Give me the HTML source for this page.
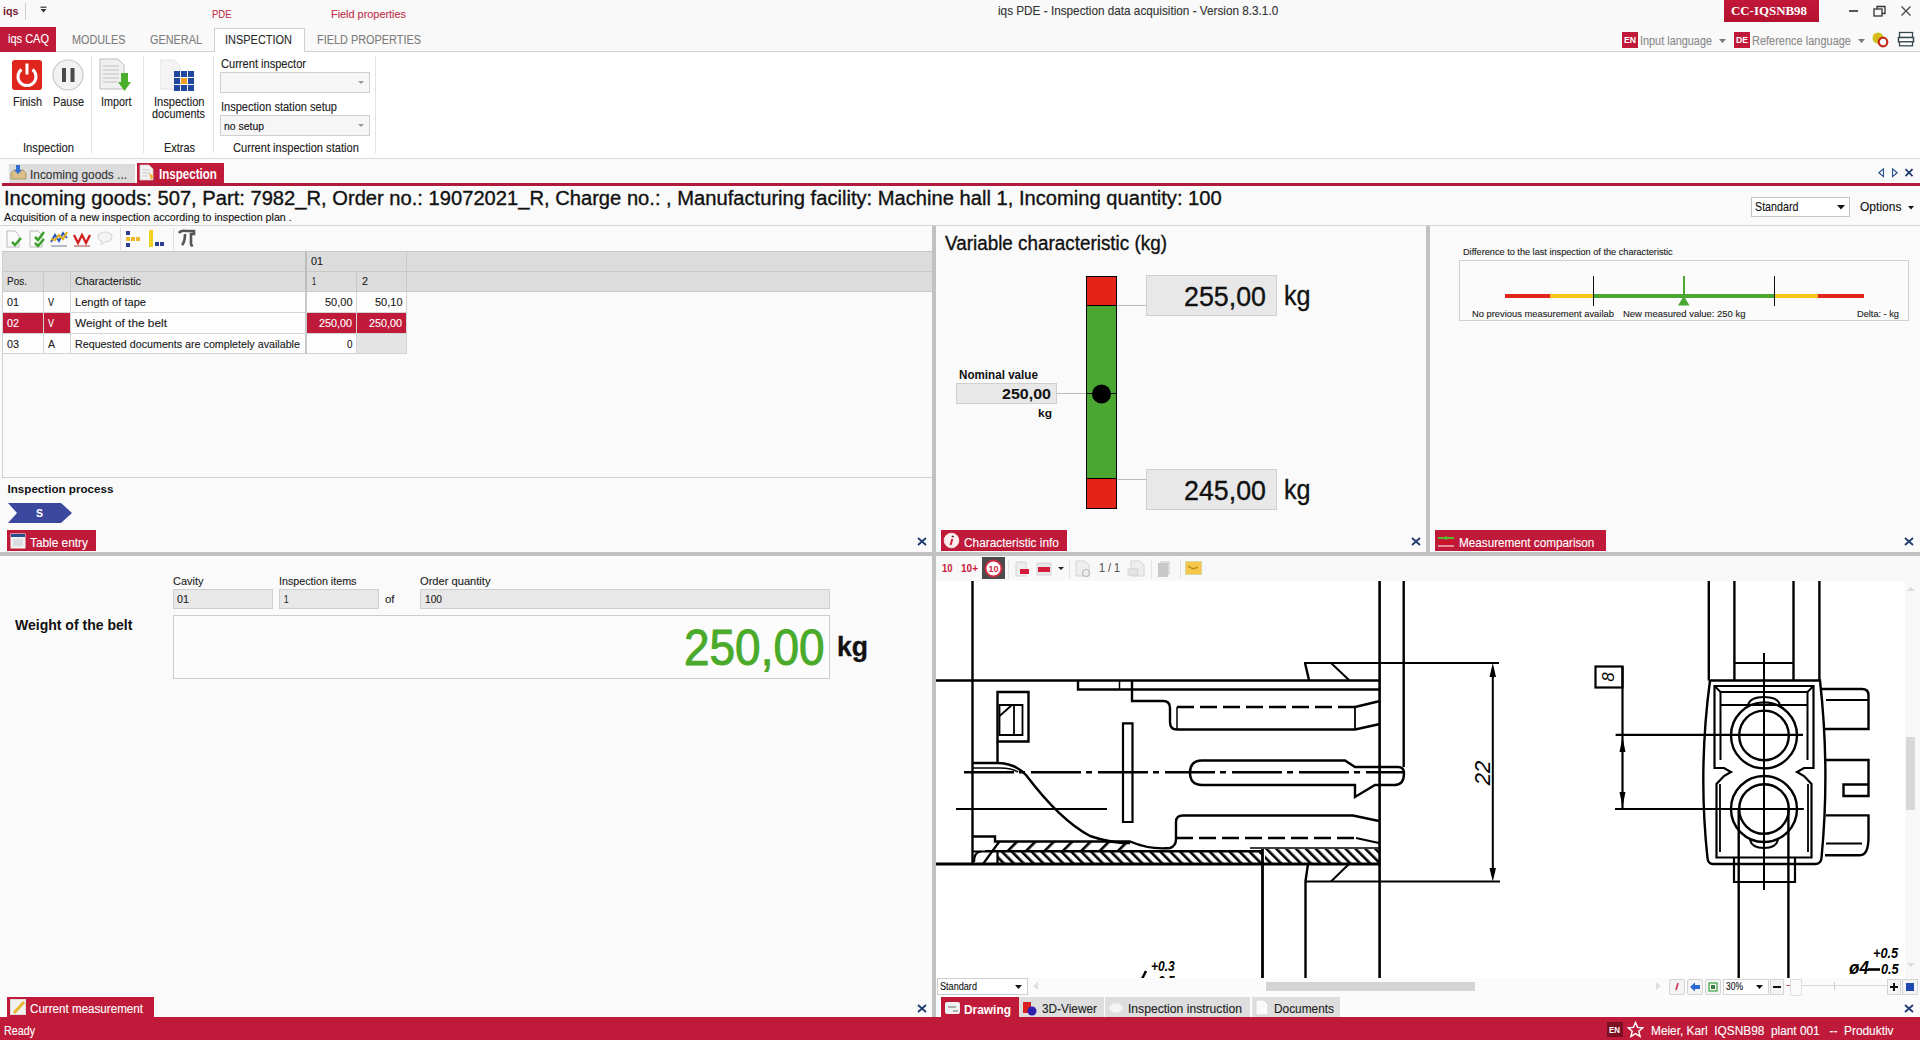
<!DOCTYPE html>
<html><head><meta charset="utf-8"><title>iqs PDE</title>
<style>
html,body{margin:0;padding:0;width:1920px;height:1040px;overflow:hidden;background:#fafafa;font-family:"Liberation Sans",sans-serif;}
.r{position:absolute;display:block}
.t{position:absolute;white-space:nowrap}
</style></head><body>
<div class="r" style="left:0px;top:0px;width:1920px;height:52px;background:#f9f9f9"></div>
<div class="r" style="left:0px;top:52px;width:1920px;height:106px;background:#ffffff"></div>
<div class="r" style="left:0px;top:51px;width:214px;height:1px;background:#d0d0d0"></div>
<div class="r" style="left:305px;top:51px;width:1615px;height:1px;background:#d0d0d0"></div>
<div class="r" style="left:0px;top:158px;width:1920px;height:1px;background:#d9d9d9"></div>
<div class="r" style="left:0px;top:159px;width:1920px;height:27px;background:#fafafa"></div>
<div class="r" style="left:0px;top:186px;width:1920px;height:40px;background:#fafafa"></div>
<div class="r" style="left:0px;top:225px;width:1920px;height:1px;background:#d4d4d4"></div>
<div class="r" style="left:0px;top:226px;width:1920px;height:791px;background:#fafafa"></div>
<div class="t" style="left:2.50px;top:5.69px;font-size:11.00px;line-height:11.00px;font-weight:700;color:#7a1c30;font-family:'Liberation Sans', sans-serif;transform:scaleX(0.9753);transform-origin:0 0;">iqs</div>
<div class="r" style="left:25px;top:3px;width:1px;height:17px;background:#cfcfcf"></div>
<svg class="r" style="left:40px;top:6px" width="8" height="9"><rect x="0.5" y="0.6" width="6" height="1.2" fill="#333"/><path d="M0.5 3 L6.5 3 L3.5 6.5Z" fill="#333"/></svg>
<div class="t" style="left:211.50px;top:8.16px;font-size:11.63px;line-height:11.63px;font-weight:400;color:#c0304a;font-family:'Liberation Sans', sans-serif;transform:scaleX(0.8156);transform-origin:0 0;-webkit-text-stroke:0.12px #c0304a;">PDE</div>
<div class="t" style="left:331.00px;top:8.16px;font-size:11.63px;line-height:11.63px;font-weight:400;color:#c0304a;font-family:'Liberation Sans', sans-serif;transform:scaleX(0.9358);transform-origin:0 0;-webkit-text-stroke:0.12px #c0304a;">Field properties</div>
<div class="t" style="left:997.50px;top:6.41px;font-size:11.92px;line-height:11.92px;font-weight:400;color:#333;font-family:'Liberation Sans', sans-serif;transform:scaleX(0.9869);transform-origin:0 0;-webkit-text-stroke:0.12px #333;">iqs PDE - Inspection data acquisition - Version 8.3.1.0</div>
<div class="r" style="left:1724px;top:0px;width:95px;height:22px;background:linear-gradient(#c2173a,#b3122f)"></div>
<div class="t" style="left:1731.00px;top:3.83px;font-size:13.20px;line-height:13.20px;font-weight:700;color:#fff;font-family:'Liberation Serif', serif;transform:scaleX(0.9776);transform-origin:0 0;">CC-IQSNB98</div>
<div class="r" style="left:1849px;top:10px;width:9px;height:1.6px;background:#555"></div>
<svg class="r" style="left:1873px;top:5px" width="14" height="13"><rect x="1" y="4" width="8" height="7" fill="none" stroke="#333" stroke-width="1.3"/><path d="M4 4 V1.5 H12 V8.5 H9" fill="none" stroke="#333" stroke-width="1.3"/></svg>
<svg class="r" style="left:1900px;top:5px" width="12" height="12"><path d="M1.5 1.5 L10.5 10.5 M10.5 1.5 L1.5 10.5" stroke="#444" stroke-width="1.25"/></svg>
<div class="r" style="left:0px;top:27px;width:56px;height:25px;background:#c01a3a"></div>
<div class="t" style="left:8.00px;top:32.43px;font-size:13.08px;line-height:13.08px;font-weight:400;color:#fff;font-family:'Liberation Sans', sans-serif;transform:scaleX(0.8418);transform-origin:0 0;-webkit-text-stroke:0.12px #fff;">iqs CAQ</div>
<div class="r" style="left:214px;top:28px;width:91px;height:24px;background:#fff;border:1px solid #d0d0d0;border-bottom:none;box-sizing:border-box"></div>
<div class="t" style="left:71.50px;top:32.93px;font-size:13.08px;line-height:13.08px;font-weight:400;color:#7d7d7d;font-family:'Liberation Sans', sans-serif;transform:scaleX(0.8270);transform-origin:0 0;-webkit-text-stroke:0.12px #7d7d7d;">MODULES</div>
<div class="t" style="left:150.00px;top:32.93px;font-size:13.08px;line-height:13.08px;font-weight:400;color:#7d7d7d;font-family:'Liberation Sans', sans-serif;transform:scaleX(0.8317);transform-origin:0 0;-webkit-text-stroke:0.12px #7d7d7d;">GENERAL</div>
<div class="t" style="left:225.00px;top:32.93px;font-size:13.08px;line-height:13.08px;font-weight:400;color:#2a2a2a;font-family:'Liberation Sans', sans-serif;transform:scaleX(0.8380);transform-origin:0 0;-webkit-text-stroke:0.12px #2a2a2a;">INSPECTION</div>
<div class="t" style="left:317.00px;top:32.93px;font-size:13.08px;line-height:13.08px;font-weight:400;color:#7d7d7d;font-family:'Liberation Sans', sans-serif;transform:scaleX(0.8334);transform-origin:0 0;-webkit-text-stroke:0.12px #7d7d7d;">FIELD PROPERTIES</div>
<div class="r" style="left:1622px;top:32px;width:16px;height:16px;background:#c01a3a"></div>
<div class="t" style="left:1624.00px;top:36.38px;font-size:9.00px;line-height:9.00px;font-weight:700;color:#fff;font-family:'Liberation Sans', sans-serif;transform:scaleX(0.9598);transform-origin:0 0;">EN</div>
<div class="t" style="left:1640.00px;top:33.93px;font-size:13.08px;line-height:13.08px;font-weight:400;color:#8a8a8a;font-family:'Liberation Sans', sans-serif;transform:scaleX(0.8318);transform-origin:0 0;-webkit-text-stroke:0.12px #8a8a8a;">Input language</div>
<svg class="r" style="left:1719px;top:39px" width="8" height="5"><path d="M0 0 H7 L3.5 4Z" fill="#777"/></svg>
<div class="r" style="left:1734px;top:32px;width:16px;height:16px;background:#c01a3a"></div>
<div class="t" style="left:1736.00px;top:36.38px;font-size:9.00px;line-height:9.00px;font-weight:700;color:#fff;font-family:'Liberation Sans', sans-serif;transform:scaleX(0.9598);transform-origin:0 0;">DE</div>
<div class="t" style="left:1752.00px;top:33.93px;font-size:13.08px;line-height:13.08px;font-weight:400;color:#8a8a8a;font-family:'Liberation Sans', sans-serif;transform:scaleX(0.8402);transform-origin:0 0;-webkit-text-stroke:0.12px #8a8a8a;">Reference language</div>
<svg class="r" style="left:1858px;top:39px" width="8" height="5"><path d="M0 0 H7 L3.5 4Z" fill="#777"/></svg>
<svg class="r" style="left:1872px;top:32px" width="18" height="16"><circle cx="6" cy="6" r="5.5" fill="#c8c81a"/><circle cx="5" cy="5" r="3.5" fill="#e8b020" opacity=".6"/><circle cx="11" cy="10" r="4.3" fill="#fff" stroke="#c42a1a" stroke-width="2.2"/></svg>
<svg class="r" style="left:1897px;top:31px" width="19" height="17"><rect x="2.5" y="1.5" width="13" height="5" fill="#fff" stroke="#3a4a50" stroke-width="1.3"/><rect x="1.5" y="6.5" width="15" height="4.3" fill="#fff" stroke="#3a4a50" stroke-width="1.5"/><rect x="2.5" y="10.8" width="13" height="4" fill="#fff" stroke="#3a4a50" stroke-width="1.3"/></svg>
<svg class="r" style="left:12px;top:60px" width="30" height="30"><rect x="0" y="0" width="30" height="30" rx="3" fill="#e0251c"/><path d="M9.5 9.5 A9 9 0 1 0 20.5 9.5" fill="none" stroke="#fff" stroke-width="3"/><rect x="13.5" y="3.5" width="3" height="11" fill="#fff"/></svg>
<svg class="r" style="left:52px;top:59px" width="33" height="33"><circle cx="16" cy="16" r="15" fill="#f2f2f2" stroke="#c8c8c8" stroke-width="1.2"/><rect x="10" y="9" width="4" height="14" fill="#4a4a4a"/><rect x="18.5" y="9" width="4" height="14" fill="#4a4a4a"/></svg>
<div class="t" style="left:12.50px;top:96.19px;font-size:12.06px;line-height:12.06px;font-weight:400;color:#222;font-family:'Liberation Sans', sans-serif;transform:scaleX(0.9011);transform-origin:0 0;-webkit-text-stroke:0.12px #222;">Finish</div>
<div class="t" style="left:52.50px;top:96.19px;font-size:12.06px;line-height:12.06px;font-weight:400;color:#222;font-family:'Liberation Sans', sans-serif;transform:scaleX(0.9062);transform-origin:0 0;-webkit-text-stroke:0.12px #222;">Pause</div>
<div class="r" style="left:91px;top:56px;width:1px;height:97px;background:#e2e2e2"></div>
<svg class="r" style="left:99px;top:58px" width="34" height="34"><path d="M1 1 H19 L25 7 V31 H1Z" fill="#f0f0f0" stroke="#bdbdbd"/><path d="M4 8 H20 M4 12 H20 M4 16 H20 M4 20 H20 M4 24 H18" stroke="#cfcfcf" stroke-width="1.5"/><path d="M22 15 H29 V24 H32 L25.5 33 L19 24 H22Z" fill="#4cae2d"/></svg>
<div class="t" style="left:100.50px;top:96.19px;font-size:12.06px;line-height:12.06px;font-weight:400;color:#222;font-family:'Liberation Sans', sans-serif;transform:scaleX(0.8921);transform-origin:0 0;-webkit-text-stroke:0.12px #222;">Import</div>
<div class="r" style="left:143px;top:56px;width:1px;height:97px;background:#e2e2e2"></div>
<svg class="r" style="left:160px;top:59px" width="36" height="34"><path d="M0 1 H14 L20 7 V30 H0Z" fill="#f4f4f4" stroke="#e2e2e2"/><g fill="#1f47a0"><rect x="14" y="12" width="6" height="6"/><rect x="21" y="12" width="6" height="6"/><rect x="28" y="12" width="6" height="6"/><rect x="14" y="19" width="6" height="6"/><rect x="28" y="19" width="6" height="6"/><rect x="14" y="26" width="6" height="6"/><rect x="21" y="26" width="6" height="6"/><rect x="28" y="26" width="6" height="6"/></g><rect x="21" y="19" width="6" height="6" fill="#f0a020"/></svg>
<div class="t" style="left:153.50px;top:95.69px;font-size:12.06px;line-height:12.06px;font-weight:400;color:#222;font-family:'Liberation Sans', sans-serif;transform:scaleX(0.9183);transform-origin:0 0;-webkit-text-stroke:0.12px #222;">Inspection</div>
<div class="t" style="left:152.00px;top:108.19px;font-size:12.06px;line-height:12.06px;font-weight:400;color:#222;font-family:'Liberation Sans', sans-serif;transform:scaleX(0.8981);transform-origin:0 0;-webkit-text-stroke:0.12px #222;">documents</div>
<div class="t" style="left:23.00px;top:142.19px;font-size:12.06px;line-height:12.06px;font-weight:400;color:#222;font-family:'Liberation Sans', sans-serif;transform:scaleX(0.9273);transform-origin:0 0;-webkit-text-stroke:0.12px #222;">Inspection</div>
<div class="t" style="left:164.00px;top:142.19px;font-size:12.06px;line-height:12.06px;font-weight:400;color:#222;font-family:'Liberation Sans', sans-serif;transform:scaleX(0.9067);transform-origin:0 0;-webkit-text-stroke:0.12px #222;">Extras</div>
<div class="r" style="left:213px;top:56px;width:1px;height:97px;background:#e2e2e2"></div>
<div class="t" style="left:221.00px;top:58.32px;font-size:12.50px;line-height:12.50px;font-weight:400;color:#222;font-family:'Liberation Sans', sans-serif;transform:scaleX(0.8866);transform-origin:0 0;-webkit-text-stroke:0.12px #222;">Current inspector</div>
<div class="r" style="left:220px;top:72px;width:150px;height:21px;background:#f6f6f6;border:1px solid #cfcfcf;box-sizing:border-box"></div>
<svg class="r" style="left:358px;top:81px" width="8" height="5"><path d="M0 0 H6 L3 3Z" fill="#999"/></svg>
<div class="t" style="left:221.00px;top:101.32px;font-size:12.50px;line-height:12.50px;font-weight:400;color:#222;font-family:'Liberation Sans', sans-serif;transform:scaleX(0.8832);transform-origin:0 0;-webkit-text-stroke:0.12px #222;">Inspection station setup</div>
<div class="r" style="left:220px;top:115px;width:150px;height:21px;background:#f6f6f6;border:1px solid #cfcfcf;box-sizing:border-box"></div>
<svg class="r" style="left:358px;top:124px" width="8" height="5"><path d="M0 0 H6 L3 3Z" fill="#999"/></svg>
<div class="t" style="left:224.00px;top:120.59px;font-size:11.00px;line-height:11.00px;font-weight:400;color:#111;font-family:'Liberation Sans', sans-serif;transform:scaleX(0.9478);transform-origin:0 0;-webkit-text-stroke:0.12px #111;">no setup</div>
<div class="t" style="left:233.00px;top:142.19px;font-size:12.06px;line-height:12.06px;font-weight:400;color:#222;font-family:'Liberation Sans', sans-serif;transform:scaleX(0.9210);transform-origin:0 0;-webkit-text-stroke:0.12px #222;">Current inspection station</div>
<div class="r" style="left:375px;top:56px;width:1px;height:97px;background:#e2e2e2"></div>
<div class="r" style="left:9px;top:164px;width:126px;height:19px;background:#dcdcdc"></div>
<svg class="r" style="left:10px;top:164px" width="17" height="17"><path d="M1 9 L4 6 H13 L16 9 V15 H1Z" fill="#d9c089" stroke="#a08c5c" stroke-width=".8"/><rect x="6" y="1" width="4" height="6" fill="#2f6fd0"/><path d="M4 6 H12 L8 10Z" fill="#2f6fd0"/></svg>
<div class="t" style="left:30.00px;top:167.93px;font-size:13.08px;line-height:13.08px;font-weight:400;color:#333;font-family:'Liberation Sans', sans-serif;transform:scaleX(0.9074);transform-origin:0 0;-webkit-text-stroke:0.12px #333;">Incoming goods ...</div>
<div class="r" style="left:137px;top:163px;width:87px;height:20px;background:#c01a3a"></div>
<svg class="r" style="left:139px;top:164px" width="16" height="18"><path d="M1 1 H10 L14 5 V16 H1Z" fill="#f4f4f4" stroke="#ccc" stroke-width=".8"/><path d="M3 6 H11 M3 9 H11 M3 12 H9" stroke="#c9c9c9"/><path d="M10 9 L15 12 L12 16Z" fill="#f2b23a"/></svg>
<div class="t" style="left:159.00px;top:167.81px;font-size:13.81px;line-height:13.81px;font-weight:700;color:#fff;font-family:'Liberation Sans', sans-serif;transform:scaleX(0.8400);transform-origin:0 0;">Inspection</div>
<div class="r" style="left:2px;top:183px;width:1918px;height:3px;background:#b01a3c"></div>
<svg class="r" style="left:1876px;top:167px" width="40" height="12"><path d="M7.5 2 V9.5 L2.8 5.75Z" fill="none" stroke="#27508f" stroke-width="1.1"/><path d="M16.5 2 V9.5 L21.2 5.75Z" fill="none" stroke="#27508f" stroke-width="1.1"/><path d="M29.5 2.2 L36.5 9.2 M36.5 2.2 L29.5 9.2" stroke="#1f3a6e" stroke-width="1.7"/></svg>
<div class="t" style="left:4.00px;top:187.77px;font-size:20.35px;line-height:20.35px;font-weight:400;color:#111;font-family:'Liberation Sans', sans-serif;transform:scaleX(0.9906);transform-origin:0 0;-webkit-text-stroke:0.35px #111;">Incoming goods: 507, Part: 7982_R, Order no.: 19072021_R, Charge no.: , Manufacturing facility: Machine hall 1, Incoming quantity: 100</div>
<div class="t" style="left:4.00px;top:211.70px;font-size:11.34px;line-height:11.34px;font-weight:400;color:#111;font-family:'Liberation Sans', sans-serif;transform:scaleX(0.9441);transform-origin:0 0;-webkit-text-stroke:0.12px #111;">Acquisition of a new inspection according to inspection plan .</div>
<div class="r" style="left:1751px;top:197px;width:99px;height:20px;background:#fff;border:1px solid #c4c4c4;box-sizing:border-box"></div>
<div class="t" style="left:1754.50px;top:200.84px;font-size:12.35px;line-height:12.35px;font-weight:400;color:#111;font-family:'Liberation Sans', sans-serif;transform:scaleX(0.8675);transform-origin:0 0;-webkit-text-stroke:0.12px #111;">Standard</div>
<svg class="r" style="left:1837px;top:205px" width="9" height="5"><path d="M0 0 H8 L4 4.5Z" fill="#111"/></svg>
<div class="t" style="left:1859.50px;top:200.84px;font-size:12.35px;line-height:12.35px;font-weight:400;color:#111;font-family:'Liberation Sans', sans-serif;transform:scaleX(0.9747);transform-origin:0 0;-webkit-text-stroke:0.12px #111;">Options</div>
<svg class="r" style="left:1908px;top:206px" width="7" height="4"><path d="M0 0 H6 L3 3.5Z" fill="#111"/></svg>
<svg class="r" style="left:4px;top:228px" width="200" height="22">
<g transform="translate(2,2)"><path d="M1 1 H9 L13 5 V17 H1Z" fill="#fafafa" stroke="#aaa" stroke-width=".8"/><path d="M6 12 L9 15 L15 8" fill="none" stroke="#3aa02a" stroke-width="2.5"/></g>
<g transform="translate(25,2)"><path d="M1 1 H9 L13 5 V17 H1Z" fill="#fafafa" stroke="#aaa" stroke-width=".8"/><path d="M6 7 L9 10 L15 2 M6 13 L9 16 L15 9" fill="none" stroke="#3aa02a" stroke-width="2.5"/></g>
<g transform="translate(46,2)"><path d="M1 12 L5 5 L9 11 L13 3 L17 8" fill="none" stroke="#2a58c0" stroke-width="2"/><path d="M1 9 L5 10 L9 5 L13 9 L17 2" fill="none" stroke="#e0b020" stroke-width="2"/><path d="M1 16 H17" stroke="#6a7a9a" stroke-width="1"/></g>
<g transform="translate(69,2)"><path d="M1 5 L5 13 L9 5 L13 13 L17 5" fill="none" stroke="#d21c1c" stroke-width="2.3"/><path d="M1 16 H17" stroke="#b04040" stroke-width="1"/></g>
<g transform="translate(93,2)"><ellipse cx="8" cy="7" rx="7" ry="5" fill="#f4f4f4" stroke="#d8d8d8" stroke-width="1.2"/><path d="M5 11 L4 15 L9 11.5" fill="#f4f4f4" stroke="#d8d8d8"/></g>
<g transform="translate(122,2)"><rect x="0" y="1" width="4" height="4" fill="#2b3f8f"/><rect x="0" y="7" width="4" height="4" fill="#f0b828"/><rect x="5" y="7" width="4" height="4" fill="#f0b828"/><rect x="10" y="7" width="4" height="4" fill="#f0b828"/><rect x="0" y="13" width="4" height="4" fill="#2b3f8f"/></g>
<g transform="translate(145,2)"><rect x="0" y="0" width="4" height="17" fill="#f0d020"/><rect x="6" y="12" width="4" height="4" fill="#2b3f8f"/><rect x="11" y="12" width="4" height="4" fill="#2b3f8f"/></g>
<g transform="translate(174,2)"><path d="M1 3 Q3 0 8 1 H16 V4 H13 V14 Q13 16 15 15 M7 4 Q7 12 4 15" fill="none" stroke="#555" stroke-width="2.6"/></g>
</svg>
<div class="r" style="left:120px;top:228px;width:1px;height:22px;background:#e0e0e0"></div>
<div class="r" style="left:173px;top:228px;width:1px;height:22px;background:#e0e0e0"></div>
<div class="r" style="left:2px;top:251px;width:930px;height:40px;background:#dcdcdc"></div>
<div class="r" style="left:2px;top:251px;width:930px;height:1px;background:#c6c6c6"></div>
<div class="r" style="left:2px;top:271px;width:930px;height:1px;background:#c9c9c9"></div>
<div class="r" style="left:2px;top:291px;width:930px;height:1px;background:#c9c9c9"></div>
<div class="r" style="left:2px;top:251px;width:1px;height:227px;background:#d0d0d0"></div>
<div class="r" style="left:305px;top:251px;width:2px;height:40px;background:#bdbdbd"></div>
<div class="r" style="left:406px;top:251px;width:1px;height:40px;background:#c9c9c9"></div>
<div class="r" style="left:356px;top:271px;width:1px;height:20px;background:#c9c9c9"></div>
<div class="r" style="left:43px;top:271px;width:1px;height:20px;background:#c9c9c9"></div>
<div class="r" style="left:70px;top:271px;width:1px;height:20px;background:#c9c9c9"></div>
<div class="r" style="left:3px;top:292px;width:403px;height:62px;background:#fdfdfd"></div>
<div class="r" style="left:3px;top:312px;width:404px;height:1px;background:#d4d4d4"></div>
<div class="r" style="left:3px;top:333px;width:404px;height:1px;background:#d4d4d4"></div>
<div class="r" style="left:3px;top:353px;width:404px;height:1px;background:#d4d4d4"></div>
<div class="r" style="left:43px;top:292px;width:1px;height:62px;background:#d4d4d4"></div>
<div class="r" style="left:70px;top:292px;width:1px;height:62px;background:#d4d4d4"></div>
<div class="r" style="left:356px;top:292px;width:1px;height:62px;background:#d4d4d4"></div>
<div class="r" style="left:406px;top:292px;width:1px;height:62px;background:#d4d4d4"></div>
<div class="r" style="left:305px;top:292px;width:2px;height:62px;background:#c8c8c8"></div>
<div class="r" style="left:3px;top:313px;width:40px;height:20px;background:#c01a3a"></div>
<div class="r" style="left:44px;top:313px;width:26px;height:20px;background:#c01a3a"></div>
<div class="r" style="left:307px;top:313px;width:49px;height:20px;background:#c01a3a"></div>
<div class="r" style="left:357px;top:313px;width:49px;height:20px;background:#c01a3a"></div>
<div class="r" style="left:357px;top:334px;width:49px;height:19px;background:#e4e4e4"></div>
<div class="t" style="left:311.00px;top:254.66px;font-size:11.63px;line-height:11.63px;font-weight:400;color:#1a1a1a;font-family:'Liberation Sans', sans-serif;transform:scaleX(0.9278);transform-origin:0 0;-webkit-text-stroke:0.12px #1a1a1a;">01</div>
<div class="t" style="left:6.50px;top:274.66px;font-size:11.63px;line-height:11.63px;font-weight:400;color:#1a1a1a;font-family:'Liberation Sans', sans-serif;transform:scaleX(0.8596);transform-origin:0 0;-webkit-text-stroke:0.12px #1a1a1a;">Pos.</div>
<div class="t" style="left:74.50px;top:274.66px;font-size:11.63px;line-height:11.63px;font-weight:400;color:#1a1a1a;font-family:'Liberation Sans', sans-serif;transform:scaleX(0.9285);transform-origin:0 0;-webkit-text-stroke:0.12px #1a1a1a;">Characteristic</div>
<div class="t" style="left:312.00px;top:274.66px;font-size:11.63px;line-height:11.63px;font-weight:400;color:#1a1a1a;font-family:'Liberation Sans', sans-serif;transform:scaleX(0.6185);transform-origin:0 0;-webkit-text-stroke:0.12px #1a1a1a;">1</div>
<div class="t" style="left:361.50px;top:274.66px;font-size:11.63px;line-height:11.63px;font-weight:400;color:#1a1a1a;font-family:'Liberation Sans', sans-serif;transform:scaleX(0.9278);transform-origin:0 0;-webkit-text-stroke:0.12px #1a1a1a;">2</div>
<div class="t" style="left:6.50px;top:295.66px;font-size:11.63px;line-height:11.63px;font-weight:400;color:#1a1a1a;font-family:'Liberation Sans', sans-serif;transform:scaleX(0.9278);transform-origin:0 0;-webkit-text-stroke:0.12px #1a1a1a;">01</div>
<div class="t" style="left:48.00px;top:295.66px;font-size:11.63px;line-height:11.63px;font-weight:400;color:#1a1a1a;font-family:'Liberation Sans', sans-serif;transform:scaleX(0.7736);transform-origin:0 0;-webkit-text-stroke:0.12px #1a1a1a;">V</div>
<div class="t" style="left:74.50px;top:295.66px;font-size:11.63px;line-height:11.63px;font-weight:400;color:#1a1a1a;font-family:'Liberation Sans', sans-serif;transform:scaleX(0.9549);transform-origin:0 0;-webkit-text-stroke:0.12px #1a1a1a;">Length of tape</div>
<div class="t" style="left:6.50px;top:316.66px;font-size:11.63px;line-height:11.63px;font-weight:400;color:#fff;font-family:'Liberation Sans', sans-serif;transform:scaleX(0.9278);transform-origin:0 0;-webkit-text-stroke:0.12px #fff;">02</div>
<div class="t" style="left:48.00px;top:316.66px;font-size:11.63px;line-height:11.63px;font-weight:400;color:#fff;font-family:'Liberation Sans', sans-serif;transform:scaleX(0.7736);transform-origin:0 0;-webkit-text-stroke:0.12px #fff;">V</div>
<div class="t" style="left:74.50px;top:316.66px;font-size:11.63px;line-height:11.63px;font-weight:400;color:#1a1a1a;font-family:'Liberation Sans', sans-serif;transform:scaleX(1.0190);transform-origin:0 0;-webkit-text-stroke:0.12px #1a1a1a;">Weight of the belt</div>
<div class="t" style="left:6.50px;top:337.66px;font-size:11.63px;line-height:11.63px;font-weight:400;color:#1a1a1a;font-family:'Liberation Sans', sans-serif;transform:scaleX(0.9278);transform-origin:0 0;-webkit-text-stroke:0.12px #1a1a1a;">03</div>
<div class="t" style="left:48.00px;top:337.66px;font-size:11.63px;line-height:11.63px;font-weight:400;color:#1a1a1a;font-family:'Liberation Sans', sans-serif;transform:scaleX(0.9025);transform-origin:0 0;-webkit-text-stroke:0.12px #1a1a1a;">A</div>
<div class="t" style="left:74.50px;top:337.66px;font-size:11.63px;line-height:11.63px;font-weight:400;color:#1a1a1a;font-family:'Liberation Sans', sans-serif;transform:scaleX(0.9209);transform-origin:0 0;-webkit-text-stroke:0.12px #1a1a1a;">Requested documents are completely available</div>
<div class="t" style="left:324.50px;top:295.66px;font-size:11.63px;line-height:11.63px;font-weight:400;color:#1a1a1a;font-family:'Liberation Sans', sans-serif;transform:scaleX(0.9451);transform-origin:0 0;-webkit-text-stroke:0.12px #1a1a1a;">50,00</div>
<div class="t" style="left:374.50px;top:295.66px;font-size:11.63px;line-height:11.63px;font-weight:400;color:#1a1a1a;font-family:'Liberation Sans', sans-serif;transform:scaleX(0.9451);transform-origin:0 0;-webkit-text-stroke:0.12px #1a1a1a;">50,10</div>
<div class="t" style="left:319.00px;top:316.66px;font-size:11.63px;line-height:11.63px;font-weight:400;color:#fff;font-family:'Liberation Sans', sans-serif;transform:scaleX(0.9279);transform-origin:0 0;-webkit-text-stroke:0.12px #fff;">250,00</div>
<div class="t" style="left:369.00px;top:316.66px;font-size:11.63px;line-height:11.63px;font-weight:400;color:#fff;font-family:'Liberation Sans', sans-serif;transform:scaleX(0.9279);transform-origin:0 0;-webkit-text-stroke:0.12px #fff;">250,00</div>
<div class="t" style="left:346.50px;top:337.66px;font-size:11.63px;line-height:11.63px;font-weight:400;color:#1a1a1a;font-family:'Liberation Sans', sans-serif;transform:scaleX(0.8505);transform-origin:0 0;-webkit-text-stroke:0.12px #1a1a1a;">0</div>
<div class="r" style="left:2px;top:477px;width:930px;height:1px;background:#d0d0d0"></div>
<div class="t" style="left:7.50px;top:483.16px;font-size:11.63px;line-height:11.63px;font-weight:700;color:#111;font-family:'Liberation Sans', sans-serif;">Inspection process</div>
<svg class="r" style="left:8px;top:503px" width="65" height="20"><path d="M0 0 H53 L64 10 L53 20 H0 L9 10Z" fill="#3c489e"/></svg>
<div class="t" style="left:35.50px;top:507.69px;font-size:11.00px;line-height:11.00px;font-weight:700;color:#fff;font-family:'Liberation Sans', sans-serif;transform:scaleX(0.9540);transform-origin:0 0;">S</div>
<div class="r" style="left:7px;top:530px;width:89px;height:21px;background:#c01a3a"></div>
<svg class="r" style="left:10px;top:533px" width="16" height="16"><rect x="1" y="1" width="14" height="14" fill="#eee" stroke="#f7f7f7"/><rect x="1" y="1" width="14" height="3" fill="#2a4f90"/><rect x="3" y="6" width="10" height="7" fill="#d8dde4"/></svg>
<div class="t" style="left:30.00px;top:535.58px;font-size:13.37px;line-height:13.37px;font-weight:400;color:#fff;font-family:'Liberation Sans', sans-serif;transform:scaleX(0.8867);transform-origin:0 0;-webkit-text-stroke:0.12px #fff;">Table entry</div>
<svg class="r" style="left:917px;top:537px" width="10" height="9"><path d="M1 1 L9 8 M9 1 L1 8" stroke="#1f3a6e" stroke-width="1.8"/></svg>
<div class="r" style="left:0px;top:552px;width:1920px;height:4px;background:#c1c1c1"></div>
<div class="r" style="left:932px;top:226px;width:4px;height:791px;background:#c1c1c1"></div>
<div class="r" style="left:1426px;top:226px;width:4px;height:326px;background:#c1c1c1"></div>
<div class="t" style="left:945.00px;top:233.27px;font-size:20.35px;line-height:20.35px;font-weight:400;color:#111;font-family:'Liberation Sans', sans-serif;transform:scaleX(0.9274);transform-origin:0 0;-webkit-text-stroke:0.35px #111;">Variable characteristic (kg)</div>
<div class="r" style="left:1086px;top:276px;width:31px;height:233px;background:#000"></div>
<div class="r" style="left:1087px;top:277px;width:29px;height:28px;background:#e42417"></div>
<div class="r" style="left:1087px;top:306px;width:29px;height:172px;background:#4aa832"></div>
<div class="r" style="left:1087px;top:479px;width:29px;height:29px;background:#e42417"></div>
<div class="r" style="left:1117px;top:305px;width:29px;height:1px;background:#bcbcbc"></div>
<div class="r" style="left:1117px;top:479px;width:29px;height:1px;background:#bcbcbc"></div>
<div class="r" style="left:1057px;top:393px;width:29px;height:1px;background:#bcbcbc"></div>
<svg class="r" style="left:1091px;top:384px" width="21" height="20"><circle cx="10.5" cy="10" r="9.5" fill="#000"/></svg>
<div class="r" style="left:1086px;top:393px;width:31px;height:1px;background:#000"></div>
<div class="r" style="left:1146px;top:275px;width:131px;height:41px;background:#e8e8e8;border:1px solid #cfcfcf;box-sizing:border-box"></div>
<div class="r" style="left:1146px;top:469px;width:131px;height:41px;background:#e8e8e8;border:1px solid #cfcfcf;box-sizing:border-box"></div>
<div class="t" style="left:1184.00px;top:281.51px;font-size:28.34px;line-height:28.34px;font-weight:400;color:#111;font-family:'Liberation Sans', sans-serif;transform:scaleX(0.9459);transform-origin:0 0;-webkit-text-stroke:0.35px #111;">255,00</div>
<div class="t" style="left:1284.00px;top:281.80px;font-size:28.00px;line-height:28.00px;font-weight:400;color:#111;font-family:'Liberation Sans', sans-serif;transform:scaleX(0.8961);transform-origin:0 0;-webkit-text-stroke:0.35px #111;">kg</div>
<div class="t" style="left:1184.00px;top:475.51px;font-size:28.34px;line-height:28.34px;font-weight:400;color:#111;font-family:'Liberation Sans', sans-serif;transform:scaleX(0.9459);transform-origin:0 0;-webkit-text-stroke:0.35px #111;">245,00</div>
<div class="t" style="left:1284.00px;top:475.80px;font-size:28.00px;line-height:28.00px;font-weight:400;color:#111;font-family:'Liberation Sans', sans-serif;transform:scaleX(0.8961);transform-origin:0 0;-webkit-text-stroke:0.35px #111;">kg</div>
<div class="t" style="left:959.00px;top:369.71px;font-size:11.92px;line-height:11.92px;font-weight:700;color:#111;font-family:'Liberation Sans', sans-serif;transform:scaleX(0.9776);transform-origin:0 0;">Nominal value</div>
<div class="r" style="left:956px;top:383px;width:101px;height:21px;background:#e8e8e8;border:1px solid #cfcfcf;box-sizing:border-box"></div>
<div class="t" style="left:1002.00px;top:386.70px;font-size:14.53px;line-height:14.53px;font-weight:700;color:#111;font-family:'Liberation Sans', sans-serif;transform:scaleX(1.1022);transform-origin:0 0;">250,00</div>
<div class="t" style="left:1038.00px;top:407.77px;font-size:11.50px;line-height:11.50px;font-weight:700;color:#111;font-family:'Liberation Sans', sans-serif;transform:scaleX(1.0432);transform-origin:0 0;">kg</div>
<div class="r" style="left:941px;top:530px;width:126px;height:21px;background:#c01a3a"></div>
<svg class="r" style="left:943px;top:532px" width="17" height="17"><circle cx="8.5" cy="8.5" r="7.3" fill="#fbeeee" stroke="#f4dede" stroke-width="1"/><path d="M9.3 7 L7.6 13" stroke="#c8203a" stroke-width="2"/><path d="M9.9 3.8 L9.6 5.3" stroke="#5a1020" stroke-width="2"/></svg>
<div class="t" style="left:964.00px;top:535.58px;font-size:13.37px;line-height:13.37px;font-weight:400;color:#fff;font-family:'Liberation Sans', sans-serif;transform:scaleX(0.8877);transform-origin:0 0;-webkit-text-stroke:0.12px #fff;">Characteristic info</div>
<svg class="r" style="left:1411px;top:537px" width="10" height="9"><path d="M1 1 L9 8 M9 1 L1 8" stroke="#1f3a6e" stroke-width="1.8"/></svg>
<div class="t" style="left:1462.50px;top:246.88px;font-size:9.59px;line-height:9.59px;font-weight:400;color:#222;font-family:'Liberation Sans', sans-serif;transform:scaleX(0.9567);transform-origin:0 0;-webkit-text-stroke:0.12px #222;">Difference to the last inspection of the characteristic</div>
<div class="r" style="left:1459px;top:260px;width:450px;height:61px;background:#fbfbfb;border:1px solid #cfcfcf;box-sizing:border-box"></div>
<div class="r" style="left:1505px;top:294px;width:45px;height:4px;background:#e0261a"></div>
<div class="r" style="left:1550px;top:294px;width:44px;height:4px;background:#f5c518"></div>
<div class="r" style="left:1594px;top:294px;width:180px;height:4px;background:#4aa832"></div>
<div class="r" style="left:1774px;top:294px;width:44px;height:4px;background:#f5c518"></div>
<div class="r" style="left:1818px;top:294px;width:46px;height:4px;background:#e0261a"></div>
<div class="r" style="left:1593px;top:276px;width:1.3px;height:30px;background:#111"></div>
<div class="r" style="left:1773.5px;top:276px;width:1.3px;height:30px;background:#111"></div>
<div class="r" style="left:1683px;top:276px;width:1.5px;height:20px;background:#4aa832"></div>
<svg class="r" style="left:1678px;top:296px" width="12" height="10"><path d="M0 9.5 L5.8 0 L11.5 9.5Z" fill="#4aa832"/></svg>
<div class="t" style="left:1472.00px;top:308.63px;font-size:9.88px;line-height:9.88px;font-weight:400;color:#222;font-family:'Liberation Sans', sans-serif;transform:scaleX(0.9468);transform-origin:0 0;-webkit-text-stroke:0.12px #222;">No previous measurement availab</div>
<div class="t" style="left:1622.50px;top:308.63px;font-size:9.88px;line-height:9.88px;font-weight:400;color:#222;font-family:'Liberation Sans', sans-serif;transform:scaleX(0.9569);transform-origin:0 0;-webkit-text-stroke:0.12px #222;">New measured value: 250 kg</div>
<div class="t" style="left:1857.00px;top:308.63px;font-size:9.88px;line-height:9.88px;font-weight:400;color:#222;font-family:'Liberation Sans', sans-serif;transform:scaleX(0.9325);transform-origin:0 0;-webkit-text-stroke:0.12px #222;">Delta: - kg</div>
<div class="r" style="left:1435px;top:530px;width:171px;height:21px;background:#c01a3a"></div>
<svg class="r" style="left:1437px;top:534px" width="18" height="14"><path d="M1 4 H17" stroke="#5ab82e" stroke-width="2"/><path d="M9 2 V6" stroke="#5ab82e" stroke-width="1.5"/><path d="M1 8.5 H17" stroke="#d01020" stroke-width="2"/><path d="M1 12 H17" stroke="#f4b4b4" stroke-width="1.5"/></svg>
<div class="t" style="left:1458.50px;top:535.58px;font-size:13.37px;line-height:13.37px;font-weight:400;color:#fff;font-family:'Liberation Sans', sans-serif;transform:scaleX(0.8765);transform-origin:0 0;-webkit-text-stroke:0.12px #fff;">Measurement comparison</div>
<svg class="r" style="left:1904px;top:537px" width="10" height="9"><path d="M1 1 L9 8 M9 1 L1 8" stroke="#1f3a6e" stroke-width="1.8"/></svg>
<div class="t" style="left:173.00px;top:575.16px;font-size:11.63px;line-height:11.63px;font-weight:400;color:#222;font-family:'Liberation Sans', sans-serif;transform:scaleX(0.9441);transform-origin:0 0;-webkit-text-stroke:0.12px #222;">Cavity</div>
<div class="t" style="left:279.00px;top:575.16px;font-size:11.63px;line-height:11.63px;font-weight:400;color:#222;font-family:'Liberation Sans', sans-serif;transform:scaleX(0.9224);transform-origin:0 0;-webkit-text-stroke:0.12px #222;">Inspection items</div>
<div class="t" style="left:420.00px;top:575.16px;font-size:11.63px;line-height:11.63px;font-weight:400;color:#222;font-family:'Liberation Sans', sans-serif;transform:scaleX(0.9568);transform-origin:0 0;-webkit-text-stroke:0.12px #222;">Order quantity</div>
<div class="r" style="left:173px;top:589px;width:100px;height:20px;background:#e8e8e8;border:1px solid #cfcfcf;box-sizing:border-box"></div>
<div class="r" style="left:279px;top:589px;width:100px;height:20px;background:#e8e8e8;border:1px solid #cfcfcf;box-sizing:border-box"></div>
<div class="r" style="left:420px;top:589px;width:410px;height:20px;background:#e8e8e8;border:1px solid #cfcfcf;box-sizing:border-box"></div>
<div class="t" style="left:177.00px;top:594.20px;font-size:11.34px;line-height:11.34px;font-weight:400;color:#222;font-family:'Liberation Sans', sans-serif;transform:scaleX(0.9516);transform-origin:0 0;-webkit-text-stroke:0.12px #222;">01</div>
<div class="t" style="left:284.00px;top:594.20px;font-size:11.34px;line-height:11.34px;font-weight:400;color:#222;font-family:'Liberation Sans', sans-serif;transform:scaleX(0.7137);transform-origin:0 0;-webkit-text-stroke:0.12px #222;">1</div>
<div class="t" style="left:385.00px;top:593.16px;font-size:11.63px;line-height:11.63px;font-weight:400;color:#222;font-family:'Liberation Sans', sans-serif;transform:scaleX(0.9796);transform-origin:0 0;-webkit-text-stroke:0.12px #222;">of</div>
<div class="t" style="left:424.50px;top:594.20px;font-size:11.34px;line-height:11.34px;font-weight:400;color:#222;font-family:'Liberation Sans', sans-serif;transform:scaleX(0.8987);transform-origin:0 0;-webkit-text-stroke:0.12px #222;">100</div>
<div class="t" style="left:14.50px;top:618.69px;font-size:13.95px;line-height:13.95px;font-weight:700;color:#111;font-family:'Liberation Sans', sans-serif;transform:scaleX(1.0061);transform-origin:0 0;">Weight of the belt</div>
<div class="r" style="left:173px;top:615px;width:657px;height:64px;background:#fcfcfc;border:1px solid #cdcdcd;box-sizing:border-box"></div>
<div class="t" style="left:684.00px;top:624.01px;font-size:49.13px;line-height:49.13px;font-weight:400;color:#4aaa2a;font-family:'Liberation Sans', sans-serif;transform:scaleX(0.9350);transform-origin:0 0;-webkit-text-stroke:1.0px #4aaa2a;">250,00</div>
<div class="t" style="left:837.00px;top:632.60px;font-size:28.00px;line-height:28.00px;font-weight:700;color:#111;font-family:'Liberation Sans', sans-serif;transform:scaleX(0.9487);transform-origin:0 0;-webkit-text-stroke:0.35px #111;">kg</div>
<div class="r" style="left:7px;top:997px;width:147px;height:20px;background:#c01a3a"></div>
<svg class="r" style="left:10px;top:999px" width="16" height="16"><rect x="0.5" y="0.5" width="15" height="15" fill="#f2f2f2" stroke="#ddd"/><path d="M4 14 L14 3" stroke="#e8b530" stroke-width="3"/></svg>
<div class="t" style="left:30.00px;top:1003.42px;font-size:12.50px;line-height:12.50px;font-weight:400;color:#fff;font-family:'Liberation Sans', sans-serif;transform:scaleX(0.9294);transform-origin:0 0;-webkit-text-stroke:0.12px #fff;">Current measurement</div>
<svg class="r" style="left:917px;top:1004px" width="10" height="9"><path d="M1 1 L9 8 M9 1 L1 8" stroke="#1f3a6e" stroke-width="1.8"/></svg>
<div class="r" style="left:936px;top:556px;width:984px;height:25px;background:#f8f8f8"></div>
<div class="t" style="left:941.50px;top:564.39px;font-size:10.17px;line-height:10.17px;font-weight:700;color:#c8203a;font-family:'Liberation Sans', sans-serif;transform:scaleX(0.9278);transform-origin:0 0;">10</div>
<div class="t" style="left:961.00px;top:564.39px;font-size:10.17px;line-height:10.17px;font-weight:700;color:#c8203a;font-family:'Liberation Sans', sans-serif;transform:scaleX(0.9850);transform-origin:0 0;">10+</div>
<div class="r" style="left:982px;top:557px;width:23px;height:22px;background:#4a4a4a"></div>
<svg class="r" style="left:984px;top:559px" width="19" height="19"><circle cx="9.5" cy="9.5" r="8" fill="#fff" stroke="#d02a40" stroke-width="2"/><text x="9.5" y="13" font-size="9" font-weight="700" text-anchor="middle" fill="#d02a40" font-family="Liberation Sans">10</text></svg>
<div class="r" style="left:1008px;top:559px;width:1px;height:20px;background:#e4e4e4"></div>
<svg class="r" style="left:1014px;top:560px" width="52" height="18"><path d="M2 2 H12 V16 H2Z" fill="#eee" stroke="#ccc" stroke-width=".8"/><rect x="6" y="9" width="9" height="5" fill="#d21c3a"/><rect x="23" y="3" width="14" height="12" fill="#e8e8e8" stroke="#ccc" stroke-width=".8"/><rect x="24" y="7" width="12" height="5" fill="#d21c3a"/><path d="M44 7 H50 L47 10Z" fill="#222"/></svg>
<div class="r" style="left:1069px;top:559px;width:1px;height:20px;background:#e4e4e4"></div>
<svg class="r" style="left:1074px;top:560px" width="18" height="18"><path d="M2 1 H11 L15 5 V16 H2Z" fill="#eee" stroke="#ccc" stroke-width=".8"/><circle cx="12" cy="13" r="3.5" fill="none" stroke="#bbb" stroke-width="1.2"/></svg>
<div class="t" style="left:1099.00px;top:561.54px;font-size:12.35px;line-height:12.35px;font-weight:400;color:#555;font-family:'Liberation Sans', sans-serif;transform:scaleX(0.8736);transform-origin:0 0;-webkit-text-stroke:0.12px #555;">1 / 1</div>
<svg class="r" style="left:1127px;top:560px" width="18" height="18"><path d="M4 1 H13 L17 5 V16 H4Z" fill="#eee" stroke="#ccc" stroke-width=".8"/><rect x="1" y="9" width="10" height="6" fill="#e4e4e4" stroke="#ccc" stroke-width=".8"/></svg>
<div class="r" style="left:1151px;top:559px;width:1px;height:20px;background:#e4e4e4"></div>
<svg class="r" style="left:1157px;top:560px" width="17" height="18"><rect x="3" y="1" width="10" height="14" fill="#ddd"/><rect x="1" y="3" width="10" height="14" fill="#c8c8c8"/></svg>
<div class="r" style="left:1180px;top:559px;width:1px;height:20px;background:#e4e4e4"></div>
<svg class="r" style="left:1185px;top:561px" width="17" height="15"><rect x="0.5" y="0.5" width="16" height="13" fill="#f6c84a" stroke="#d8d8a0"/><path d="M3 5 L8 8 L13 6" stroke="#c09020" stroke-width="1.5" fill="none"/></svg>
<div class="r" style="left:936px;top:581px;width:969px;height:397px;background:#ffffff"></div>
<div class="r" style="left:1905px;top:581px;width:15px;height:397px;background:#f8f8f8"></div>
<div class="r" style="left:1906px;top:737px;width:9px;height:73px;background:#d8d8d8"></div>
<svg class="r" style="left:1906px;top:585px" width="10" height="386"><path d="M1 6 L5 2 L9 6Z" fill="#ddd"/><path d="M1 378 L5 382 L9 378Z" fill="#ddd"/></svg>
<svg class="r" style="left:936px;top:581px;overflow:hidden" width="969" height="397" viewBox="936 581 969 397"><line x1="972.5" y1="581" x2="972.5" y2="864" stroke="#000" stroke-width="2.4"/><line x1="936" y1="680.5" x2="1380" y2="680.5" stroke="#000" stroke-width="2.4"/><path d="M1078 680.5 V689.5 H1380" stroke="#000" stroke-width="2.4" fill="none" stroke-linejoin="miter"/><line x1="1119.5" y1="680.5" x2="1119.5" y2="689.5" stroke="#000" stroke-width="1.5"/><path d="M1132 680.5 V701 H1163 Q1170 701 1170 708 V722 Q1170 729.5 1177 729.5 H1355 L1380 724" stroke="#000" stroke-width="2.4" fill="none" stroke-linejoin="miter"/><line x1="1177" y1="707" x2="1355" y2="707" stroke="#000" stroke-width="2.4" stroke-dasharray="17 6"/><line x1="1177" y1="707" x2="1177" y2="729.5" stroke="#000" stroke-width="1.5"/><path d="M1355 707 L1380 701" stroke="#000" stroke-width="2.4" fill="none" stroke-linejoin="miter"/><line x1="1355" y1="707" x2="1355" y2="729.5" stroke="#000" stroke-width="1.8"/><path d="M997.5 692 H1028.5 V741.5 H997.5Z" stroke="#000" stroke-width="2.4" fill="none" stroke-linejoin="miter"/><path d="M999.5 705 H1022.5 V735 H999.5Z" stroke="#000" stroke-width="1.8" fill="none" stroke-linejoin="miter"/><line x1="1014" y1="705" x2="1014" y2="735" stroke="#000" stroke-width="1.8"/><line x1="999.5" y1="716" x2="1012" y2="705" stroke="#000" stroke-width="1.8"/><line x1="997.5" y1="741.5" x2="997.5" y2="763" stroke="#000" stroke-width="2.4"/><path d="M1123 822 V723.3 H1132.5 V822Z" stroke="#000" stroke-width="2.2" fill="none" stroke-linejoin="miter"/><line x1="964" y1="772.3" x2="1404" y2="772.3" stroke="#000" stroke-width="2.4" stroke-dasharray="50 5 6 6"/><path d="M972.5 763 H997 Q1015 763 1026 775 Q1060 820 1090 836 Q1110 843 1130 843" stroke="#000" stroke-width="2.4" fill="none" stroke-linejoin="miter"/><path d="M972.5 768 H1000 Q1012 768 1018 772" stroke="#000" stroke-width="1.6" fill="none" stroke-linejoin="miter"/><line x1="956" y1="809" x2="1107" y2="809" stroke="#000" stroke-width="2"/><path d="M972.5 836.5 H995 V841.5 H1130 Q1150 850 1170 848 Q1176 846 1176 839 V822 Q1176 815.5 1183 815.5 H1353 L1379 821" stroke="#000" stroke-width="2.4" fill="none" stroke-linejoin="miter"/><line x1="972.5" y1="851.5" x2="1262" y2="851.5" stroke="#000" stroke-width="2"/><line x1="1176" y1="838" x2="1356" y2="838" stroke="#000" stroke-width="2.4" stroke-dasharray="17 6"/><line x1="1356" y1="838" x2="1379" y2="843" stroke="#000" stroke-width="2"/><line x1="1250" y1="848" x2="1379" y2="848" stroke="#000" stroke-width="1.6"/><line x1="936" y1="864" x2="1380" y2="864" stroke="#000" stroke-width="2.8"/><defs><pattern id="hatA" patternUnits="userSpaceOnUse" width="7" height="7" patternTransform="rotate(-45)"><rect x="0" y="0" width="2.6" height="7" fill="#000"/></pattern><pattern id="hatB" patternUnits="userSpaceOnUse" width="13" height="13" patternTransform="rotate(45)"><rect x="0" y="0" width="2.6" height="13" fill="#000"/></pattern></defs><rect x="998" y="852" width="264" height="12" fill="url(#hatA)"/><rect x="1265" y="849" width="114" height="15" fill="url(#hatA)"/><rect x="998" y="842" width="132" height="9" fill="url(#hatB)"/><line x1="985" y1="851" x2="1262" y2="851" stroke="#000" stroke-width="1.8"/><line x1="1262.5" y1="849" x2="1262.5" y2="978" stroke="#000" stroke-width="2.8"/><path d="M1308 864 L1305.5 881 V978" stroke="#000" stroke-width="2.4" fill="none" stroke-linejoin="miter"/><line x1="1305.5" y1="881.5" x2="1500" y2="881.5" stroke="#000" stroke-width="2.2"/><line x1="1331" y1="881.5" x2="1349" y2="864" stroke="#000" stroke-width="2"/><path d="M997.5 851 V864 M983 864 L999 842 M974 862 Q974 852 981 851.5" stroke="#000" stroke-width="2.2" fill="none" stroke-linejoin="miter"/><line x1="1379.6" y1="581" x2="1379.6" y2="978" stroke="#000" stroke-width="2.6"/><line x1="1403.7" y1="581" x2="1403.7" y2="767" stroke="#000" stroke-width="2.4"/><line x1="1304" y1="663" x2="1499" y2="663" stroke="#000" stroke-width="2.2"/><path d="M1305 663 L1309 680" stroke="#000" stroke-width="2.4" fill="none" stroke-linejoin="miter"/><line x1="1331" y1="663" x2="1349" y2="680" stroke="#000" stroke-width="2"/><path d="M1202 760.5 H1345 L1355 767 H1398 Q1404 767 1404 773 Q1404 785 1395 785 H1375 L1355 797 V785 H1202 Q1190 785 1190 772.5 Q1190 760.5 1202 760.5" stroke="#000" stroke-width="2.4" fill="none" stroke-linejoin="miter"/><line x1="1492.8" y1="669" x2="1492.8" y2="876" stroke="#000" stroke-width="2"/><path d="M1492.8 663 L1489.5 677 H1496Z M1492.8 881.5 L1489.5 868 H1496Z" fill="#000"/><text x="0" y="0" transform="translate(1490,773) rotate(-90)" font-family="Liberation Sans" font-style="italic" font-size="22" fill="#000" text-anchor="middle">22</text><text x="1151" y="971" font-family="Liberation Sans" font-style="italic" font-weight="700" font-size="15" fill="#000" transform="translate(1151,971) scale(0.8,1) translate(-1151,-971)">+0.3</text><text x="1158" y="986" font-family="Liberation Sans" font-style="italic" font-weight="700" font-size="15" fill="#000" transform="translate(1158,986) scale(0.8,1) translate(-1158,-986)">0.5</text><path d="M1142 979 L1146 971" stroke="#000" stroke-width="2.5"/><line x1="1708.8" y1="581" x2="1708.8" y2="680.5" stroke="#000" stroke-width="2.4"/><line x1="1734.4" y1="581" x2="1734.4" y2="680.5" stroke="#000" stroke-width="2.4"/><line x1="1793.5" y1="581" x2="1793.5" y2="680.5" stroke="#000" stroke-width="2.4"/><line x1="1819.4" y1="581" x2="1819.4" y2="680.5" stroke="#000" stroke-width="2.4"/><line x1="1734.4" y1="663" x2="1793.5" y2="663" stroke="#000" stroke-width="2.2"/><line x1="1764" y1="653" x2="1764" y2="890" stroke="#000" stroke-width="2"/><path d="M1710 680.5 H1820 Q1830 770 1821.5 858 Q1821 864 1815 864 H1713 Q1708 864 1707.5 858 Q1698 770 1710 680.5Z" stroke="#000" stroke-width="2.4" fill="none" stroke-linejoin="miter"/><path d="M1714.5 686 V768 H1724 L1731 772 L1724 776 L1716.5 784 V857.5 H1811.5 V784 L1804 776 L1797 772 L1804 768 H1813.5 V686Z" stroke="#000" stroke-width="2.2" fill="none" stroke-linejoin="miter"/><path d="M1720.5 692 H1807.5 M1714.5 686 L1720.5 692 M1813.5 686 L1807.5 692" stroke="#000" stroke-width="2" fill="none" stroke-linejoin="miter"/><line x1="1720.5" y1="692" x2="1720.5" y2="760" stroke="#000" stroke-width="2"/><line x1="1807.5" y1="692" x2="1807.5" y2="760" stroke="#000" stroke-width="2"/><line x1="1720.5" y1="705" x2="1807.5" y2="705" stroke="#000" stroke-width="1.8"/><circle cx="1764" cy="735.4" r="33" fill="none" stroke="#000" stroke-width="2.4"/><circle cx="1764" cy="735.4" r="24.8" fill="none" stroke="#000" stroke-width="2.4"/><circle cx="1764" cy="809" r="33" fill="none" stroke="#000" stroke-width="2.4"/><circle cx="1764" cy="809" r="24.8" fill="none" stroke="#000" stroke-width="2.4"/><path d="M1748 705 Q1750 697 1764 697 Q1778 697 1780 705" stroke="#000" stroke-width="2" fill="none" stroke-linejoin="miter"/><path d="M1750 840 Q1752 848 1764 848 Q1776 848 1778 840" stroke="#000" stroke-width="2" fill="none" stroke-linejoin="miter"/><path d="M1720 784 V852 M1808 784 V852" stroke="#000" stroke-width="1.8" fill="none" stroke-linejoin="miter"/><path d="M1734 858 V882 H1795 V858" stroke="#000" stroke-width="2.2" fill="none" stroke-linejoin="miter"/><line x1="1738.7" y1="809" x2="1738.7" y2="978" stroke="#000" stroke-width="2.4"/><line x1="1788.4" y1="809" x2="1788.4" y2="978" stroke="#000" stroke-width="2.4"/><line x1="1615.6" y1="734.8" x2="1803" y2="734.8" stroke="#000" stroke-width="2.2"/><line x1="1615" y1="809" x2="1803.8" y2="809" stroke="#000" stroke-width="2.2"/><rect x="1595.5" y="666.5" width="27" height="21" fill="none" stroke="#000" stroke-width="2.2"/><text x="0" y="0" transform="translate(1614,677) rotate(-90)" font-family="Liberation Sans" font-style="italic" font-size="17" fill="#000" text-anchor="middle">8</text><line x1="1622.5" y1="666.5" x2="1622.5" y2="809" stroke="#000" stroke-width="2.2"/><path d="M1622.5 737 L1619.5 752 H1625.5Z M1622.5 807 L1619.5 792 H1625.5Z" fill="#000"/><path d="M1821 689 H1862 Q1868.5 689 1868.5 695 V729 H1825" stroke="#000" stroke-width="2.4" fill="none" stroke-linejoin="miter"/><line x1="1826" y1="700" x2="1868" y2="700" stroke="#000" stroke-width="2.2"/><path d="M1826 760 H1868.5 V796 H1843.5 V784.5 H1868.5" stroke="#000" stroke-width="2.4" fill="none" stroke-linejoin="miter"/><path d="M1826 815.4 H1868.5 V837 Q1868.5 855.2 1860 855.2 H1825" stroke="#000" stroke-width="2.4" fill="none" stroke-linejoin="miter"/><line x1="1826" y1="843.5" x2="1862" y2="843.5" stroke="#000" stroke-width="2.2"/><text x="1849" y="974.5" font-family="Liberation Sans" font-style="italic" font-weight="700" font-size="19" fill="#000" transform="translate(1849,974.5) scale(0.9,1) translate(-1849,-974.5)">&#248;4</text><text x="1873" y="958.5" font-family="Liberation Sans" font-style="italic" font-weight="700" font-size="15" fill="#000" transform="translate(1873,958.5) scale(0.85,1) translate(-1873,-958.5)">+0.5</text><text x="1881" y="974.5" font-family="Liberation Sans" font-style="italic" font-weight="700" font-size="15" fill="#000" transform="translate(1881,974.5) scale(0.85,1) translate(-1881,-974.5)">0.5</text><line x1="1868" y1="969.5" x2="1880" y2="969.5" stroke="#000" stroke-width="2.6"/></svg>
<div class="r" style="left:936px;top:978px;width:984px;height:39px;background:#fbfbfb"></div>
<div class="r" style="left:937px;top:978px;width:91px;height:17px;background:#fff;border:1px solid #cdcdcd;box-sizing:border-box"></div>
<div class="t" style="left:940.00px;top:980.90px;font-size:11.34px;line-height:11.34px;font-weight:400;color:#111;font-family:'Liberation Sans', sans-serif;transform:scaleX(0.8041);transform-origin:0 0;-webkit-text-stroke:0.12px #111;">Standard</div>
<svg class="r" style="left:1015px;top:985px" width="8" height="5"><path d="M0 0 H7 L3.5 4Z" fill="#111"/></svg>
<svg class="r" style="left:1033px;top:982px" width="6" height="9"><path d="M5 0 V8 L0 4Z" fill="#ddd"/></svg>
<div class="r" style="left:1266px;top:982px;width:209px;height:9px;background:#d4d4d4"></div>
<svg class="r" style="left:1656px;top:982px" width="6" height="9"><path d="M0 0 V8 L5 4Z" fill="#ddd"/></svg>
<div class="r" style="left:1669px;top:979px;width:16px;height:16px;background:#f4f4f4;border:1px solid #d4d4d4;box-sizing:border-box;border-radius:2px"></div>
<div class="r" style="left:1687px;top:979px;width:16px;height:16px;background:#f4f4f4;border:1px solid #d4d4d4;box-sizing:border-box;border-radius:2px"></div>
<div class="r" style="left:1705px;top:979px;width:16px;height:16px;background:#f4f4f4;border:1px solid #d4d4d4;box-sizing:border-box;border-radius:2px"></div>
<svg class="r" style="left:1669px;top:979px" width="54" height="16"><path d="M9 4 L7 11" stroke="#d03050" stroke-width="1.6"/><path d="M21 8 L26 3.5 V6 H31 V10 H26 V12.5Z" fill="#2a6ad0"/><rect x="40" y="4" width="8" height="8" fill="none" stroke="#3aa040" stroke-width="1.2"/><rect x="42" y="6" width="4" height="4" fill="#3a8040"/></svg>
<div class="r" style="left:1723px;top:979px;width:46px;height:16px;background:#fff;border:1px solid #d4d4d4;box-sizing:border-box"></div>
<div class="t" style="left:1726.00px;top:981.40px;font-size:11.34px;line-height:11.34px;font-weight:400;color:#111;font-family:'Liberation Sans', sans-serif;transform:scaleX(0.7492);transform-origin:0 0;-webkit-text-stroke:0.12px #111;">30%</div>
<svg class="r" style="left:1756px;top:985px" width="8" height="5"><path d="M0 0 H7 L3.5 4Z" fill="#111"/></svg>
<div class="r" style="left:1770px;top:979px;width:14px;height:16px;background:#f4f4f4;border:1px solid #d4d4d4;box-sizing:border-box"></div>
<div class="r" style="left:1773px;top:986px;width:8px;height:2px;background:#111"></div>
<div class="r" style="left:1786px;top:985px;width:101px;height:1px;background:#d8d8d8"></div>
<div class="r" style="left:1787px;top:985px;width:3px;height:1px;background:#e04050"></div>
<div class="r" style="left:1790px;top:979px;width:12px;height:17px;background:#fafafa;border:1px solid #e0e0e0;box-sizing:border-box"></div>
<div class="r" style="left:1834px;top:982px;width:1px;height:8px;background:#ccc"></div>
<div class="r" style="left:1887px;top:979px;width:14px;height:16px;background:#f4f4f4;border:1px solid #d4d4d4;box-sizing:border-box"></div>
<div class="r" style="left:1890px;top:986px;width:8px;height:2px;background:#111"></div>
<div class="r" style="left:1893px;top:983px;width:2px;height:8px;background:#111"></div>
<div class="r" style="left:1902px;top:979px;width:16px;height:16px;background:#f4f4f4;border:1px solid #d4d4d4;box-sizing:border-box"></div>
<div class="r" style="left:1906px;top:983px;width:8px;height:8px;background:#1f48b0"></div>
<div class="r" style="left:941px;top:997px;width:78px;height:20px;background:#c01a3a"></div>
<svg class="r" style="left:944px;top:1001px" width="17" height="14"><rect x="1" y="1" width="15" height="12" rx="2" fill="#f0f0f0"/><path d="M4 6 H12 M9 10 H14" stroke="#999" stroke-width="1.3"/></svg>
<div class="t" style="left:964.00px;top:1002.68px;font-size:13.37px;line-height:13.37px;font-weight:700;color:#fff;font-family:'Liberation Sans', sans-serif;transform:scaleX(0.8910);transform-origin:0 0;">Drawing</div>
<div class="r" style="left:1019px;top:997px;width:85px;height:20px;background:#dedede"></div>
<svg class="r" style="left:1022px;top:1001px" width="16" height="15"><rect x="1" y="1" width="8" height="11" fill="#d82020"/><circle cx="10" cy="10" r="4.5" fill="#3020b0"/></svg>
<div class="t" style="left:1042.00px;top:1003.42px;font-size:12.50px;line-height:12.50px;font-weight:400;color:#222;font-family:'Liberation Sans', sans-serif;transform:scaleX(0.9462);transform-origin:0 0;-webkit-text-stroke:0.12px #222;">3D-Viewer</div>
<div class="r" style="left:1105px;top:997px;width:145px;height:20px;background:#dedede"></div>
<svg class="r" style="left:1108px;top:1002px" width="16" height="13"><ellipse cx="8" cy="6" rx="7" ry="5" fill="#f4f4f4" stroke="#e4e4e4"/></svg>
<div class="t" style="left:1128.00px;top:1003.42px;font-size:12.50px;line-height:12.50px;font-weight:400;color:#222;font-family:'Liberation Sans', sans-serif;transform:scaleX(0.9708);transform-origin:0 0;-webkit-text-stroke:0.12px #222;">Inspection instruction</div>
<div class="r" style="left:1252px;top:997px;width:88px;height:20px;background:#dedede"></div>
<svg class="r" style="left:1255px;top:999px" width="14" height="17"><path d="M1 1 H9 L13 5 V16 H1Z" fill="#fafafa" stroke="#d4d4d4"/></svg>
<div class="t" style="left:1274.00px;top:1003.42px;font-size:12.50px;line-height:12.50px;font-weight:400;color:#222;font-family:'Liberation Sans', sans-serif;transform:scaleX(0.9490);transform-origin:0 0;-webkit-text-stroke:0.12px #222;">Documents</div>
<svg class="r" style="left:1904px;top:1004px" width="10" height="9"><path d="M1 1 L9 8 M9 1 L1 8" stroke="#1f3a6e" stroke-width="1.8"/></svg>
<div class="r" style="left:0px;top:1017px;width:1920px;height:23px;background:#c01a3a"></div>
<div class="t" style="left:3.50px;top:1025.12px;font-size:12.50px;line-height:12.50px;font-weight:400;color:#fff;font-family:'Liberation Sans', sans-serif;transform:scaleX(0.8579);transform-origin:0 0;-webkit-text-stroke:0.12px #fff;">Ready</div>
<div class="r" style="left:1607px;top:1022px;width:16px;height:15px;background:#7a1022"></div>
<div class="t" style="left:1609.00px;top:1025.88px;font-size:9.00px;line-height:9.00px;font-weight:700;color:#fff;font-family:'Liberation Sans', sans-serif;transform:scaleX(0.8798);transform-origin:0 0;">EN</div>
<svg class="r" style="left:1627px;top:1021px" width="17" height="17"><path d="M8.5 1.5 L10.6 6.4 L15.8 6.8 L11.8 10.2 L13.1 15.4 L8.5 12.6 L3.9 15.4 L5.2 10.2 L1.2 6.8 L6.4 6.4Z" fill="none" stroke="#fff" stroke-width="1.4"/></svg>
<div class="t" style="left:1650.50px;top:1025.22px;font-size:12.50px;line-height:12.50px;font-weight:400;color:#fff;font-family:'Liberation Sans', sans-serif;transform:scaleX(0.9485);transform-origin:0 0;white-space:pre;-webkit-text-stroke:0.12px #fff;">Meier, Karl  IQSNB98  plant 001   --  Produktiv</div>
</body></html>
